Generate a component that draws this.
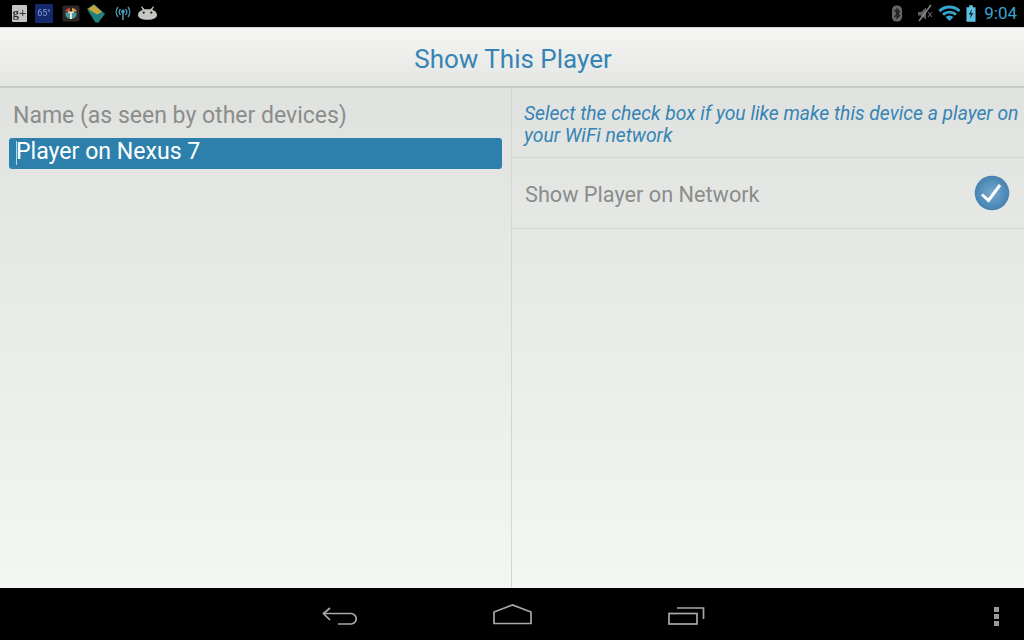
<script>
</script>

<div class="screen">
  <div class="status">
    <div class="status-icons">
      <div class="gplus">g+</div>
      <div class="temp">65°</div>
      <svg class="ic tile" width="18" height="17" viewBox="0 0 18 17"><rect x="0.500" y="0.500" width="17" height="16" rx="2" fill="#2e2926"/><path d="M3.500 5.500A6 6 0 0 1 8 3v3.500H3.500z" fill="#c8503a"/><path d="M10 3a6 6 0 0 1 4.500 2.500V6.500H10z" fill="#d9a13c"/><path d="M3.500 7.500h11A6 6 0 0 1 10 14V9H8v5a6 6 0 0 1-4.500-6.500z" fill="#4d9a9c"/><path d="M6 6.500h6v1.500h-2v6H8V8H6z" fill="#e8e4da"/></svg>
      <svg class="ic gem" width="18" height="19" viewBox="0 0 18 19"><path d="M0 5 7 0l11 10-7 9-3-1z" fill="#1f7f7c"/><path d="M1 5 7 1l8 7-5 2.500z" fill="#c9a53f"/></svg>
      <svg class="ic sig" width="16" height="14" viewBox="0 0 16 14" fill="none" stroke="#4a97b5" stroke-width="1.400"><path d="M3 1a8 8 0 0 0 0 10M13 1a8 8 0 0 1 0 10M5.500 3a4.500 4.500 0 0 0 0 6M10.500 3a4.500 4.500 0 0 1 0 6"/><path d="M8 5v9" stroke-width="1.600"/><circle cx="8" cy="5.500" r="1.200" fill="#4a97b5"/></svg>
      <svg class="ic droid" width="19" height="14" viewBox="0 0 20 14"><path d="M4 0l2.800 3h6.400L16 0l.8.700L15 3.600c3 1 5 3 5 5.400 0 3-4 5-10 5S0 12 0 9c0-2.400 2-4.400 5-5.400L3.200.700z" fill="#c6c6c2"/><circle cx="6" cy="6.500" r="1.200" fill="#222"/><circle cx="14" cy="6.500" r="1.200" fill="#222"/></svg>
    </div>
    <div class="status-right">
      <svg width="12" height="17" viewBox="0 0 12 17"><rect x="1" y="0.500" width="10" height="16" rx="4.500" fill="#666"/><path d="M3.500 5 8.500 10.500 6 13V4L8.500 6.500 3.500 12" fill="none" stroke="#1a1a1a" stroke-width="1.200"/></svg>
      <svg class="mute" width="18" height="18" viewBox="0 0 18 18"><path d="M2 8v3.500h3l5 4V3.500L5 8z" fill="#5f5f5f"/><path d="M15 1 3 17" stroke="#8a8a8a" stroke-width="1.400"/><path d="M12 8l4 5M16 8l-4 5" stroke="#5f5f5f" stroke-width="1.200"/></svg>
      <svg class="wifi" width="23" height="16" viewBox="0 0 23 16"><path d="M.5 5a16 16 0 0 1 22 0l-2 2.200a13 13 0 0 0-18 0z" fill="#37a5cf"/><path d="M4 8.600a11 11 0 0 1 15 0l-2 2.200a8 8 0 0 0-11 0z" fill="#37a5cf"/><path d="M7.500 12a6 6 0 0 1 8 0l-4 4z" fill="#37a5cf"/></svg>
      <svg class="batt" width="10" height="17" viewBox="0 0 11 18"><path d="M3.500 0h4v2h3v16H.5V2h3z" fill="#5fc0e4"/><path d="M6.500 4 3 10h2.300L4.500 15 8 8.500H5.700z" fill="#0b2a38"/></svg>
      <span class="clock">9:04</span>
    </div>
  </div>

  <main class="app-area">
    <header class="title-bar"><h1>Show This Player</h1></header>
    <div class="panes">
      <section class="left">
        <div class="label">Name (as seen by other devices)</div>
        <div class="field"><span class="caret"></span>Player on Nexus 7</div>
      </section>
      <section class="right">
        <p class="hint">Select the check box if you like make this device a player on your WiFi network</p>
        <div class="row">
          <span>Show Player on Network</span>
          <svg width="36" height="36" viewBox="0 0 36 36">
            <defs><radialGradient id="c" cx="50%" cy="50%" r="55%"><stop offset="0" stop-color="#74a8cd"/><stop offset="0.800" stop-color="#4b88b6"/><stop offset="1" stop-color="#3f7aa8"/></radialGradient></defs>
            <circle cx="18" cy="18" r="17.300" fill="url(#c)"/>
            <path d="M8 19.500 14.500 25.500 26 10" fill="none" stroke="#fff" stroke-width="3"/>
          </svg>
        </div>
      </section>
    </div>
  </main>

  <nav class="nav">
    <svg class="back" width="36" height="20" viewBox="0 0 36 20" fill="none" stroke="#a8a8a8" stroke-width="1.700"><path d="M8 2 1.500 7.500 8 14"/><path d="M1.500 7.500H29a5.200 5.200 0 0 1 0 10.500H16"/></svg>
    <svg class="home" width="39" height="21" viewBox="0 0 39 21" fill="none" stroke="#a8a8a8" stroke-width="1.700"><path d="M1 19.500V8L19.500 1 38 8v11.500z"/></svg>
    <svg class="recent" width="37" height="19" viewBox="0 0 37 19" fill="none" stroke="#a8a8a8" stroke-width="1.700"><rect x="1" y="7.500" width="28" height="10.500"/><path d="M9 2h26.500v11"/></svg>
    <div class="menu"><i></i><i></i><i></i></div>
  </nav>
</div>

<style>
  :global(body) { margin: 0; background: #000; }
  .screen {
    width: 1024px;
    height: 640px;
    display: flex;
    flex-direction: column;
    overflow: hidden;
    font-family: Roboto, "Liberation Sans", sans-serif;
  }
  .status {
    height: 27px;
    flex: none;
    background: #000;
    display: flex;
    justify-content: space-between;
    align-items: center;
    box-sizing: border-box;
    padding: 0 7px 1px 12px;
  }
  .status-icons { display: flex; align-items: center; }
  .status-icons > *, .status-right > svg { filter: blur(0.4px); }
  .gplus {
    width: 15px;
    height: 17px;
    background: #c4c4c2;
    border-radius: 1px;
    color: #333;
    font: bold 13px/15px "Liberation Serif", serif;
    text-align: center;
  }
  .temp {
    width: 18px;
    height: 19px;
    margin-left: 8px;
    background: #15296f;
    color: #7d9fd0;
    font-size: 9px;
    line-height: 19px;
    text-align: center;
  }
  .ic { display: block; }
  .tile { margin-left: 9px; }
  .gem { margin-left: 7px; }
  .sig { margin-left: 10px; }
  .droid { margin-left: 7px; }
  .status-right { display: flex; align-items: center; }
  .mute { margin-left: 13px; }
  .wifi { margin-left: 4px; }
  .batt { margin-left: 5px; }
  .clock { margin-left: 8px; color: #3ba4cf; font-size: 17px; line-height: 20px; }

  .app-area {
    flex: 1;
    min-height: 0;
    display: flex;
    flex-direction: column;
    background: linear-gradient(#e0e2df 60px, #f4f6f4 100%);
  }
  .title-bar {
    height: 61px;
    flex: none;
    box-sizing: border-box;
    padding: 3px 0 0 2px;
    border-top: 1px solid #d4d6d4;
    border-bottom: 2px solid #c7c9c6;
    background: linear-gradient(#f5f6f4, #e4e6e3);
    display: flex;
    justify-content: center;
    align-items: center;
  }
  h1 { margin: 0; font-size: 26px; font-weight: 400; color: #3684b6; }
  .panes { flex: 1; min-height: 0; display: flex; }
  .left {
    width: 512px;
    flex: none;
    box-sizing: border-box;
    border-right: 1px solid #d4d6d3;
    padding: 12px 9px 0 9px;
  }
  .label { padding-left: 4px; font-size: 23px; line-height: 32px; color: #8b8d8b; }
  .field {
    position: relative;
    margin-top: 6px;
    height: 31px;
    width: 493px;
    box-sizing: border-box;
    padding-left: 7px;
    border-radius: 3px;
    background: #2e80ac;
    color: #fff;
    font-size: 23.100px;
    line-height: 28px;
  }
  .caret { position: absolute; left: 7px; top: 3px; width: 1px; height: 24px; background: #bcd6e5; }
  .right { flex: 1; min-width: 0; }
  .hint {
    margin: 0;
    height: 70px;
    box-sizing: border-box;
    border-bottom: 1px solid #d4d6d3;
    padding: 15px 0 0 12px;
    font-size: 19.300px;
    line-height: 22px;
    font-style: italic;
    color: #3684b6;
  }
  .row {
    height: 71px;
    box-sizing: border-box;
    border-bottom: 1px solid #d4d6d3;
    display: flex;
    justify-content: space-between;
    align-items: center;
    padding: 0 14px 0 13px;
    font-size: 21.700px;
    color: #8b8d8b;
  }
  .row span { padding-top: 2px; }
  .nav {
    height: 52px;
    flex: none;
    background: #000;
    position: relative;
    display: flex;
    align-items: center;
  }
  .back { margin-left: 322px; margin-top: 3px; }
  .home { margin-left: 135px; margin-top: 1px; }
  .recent { margin-left: 136px; margin-top: 3px; }
  .menu { position: absolute; left: 994px; top: 19px; display: flex; flex-direction: column; gap: 2px; }
  .menu i { display: block; width: 5px; height: 5px; background: #9a9a9a; }
</style>
